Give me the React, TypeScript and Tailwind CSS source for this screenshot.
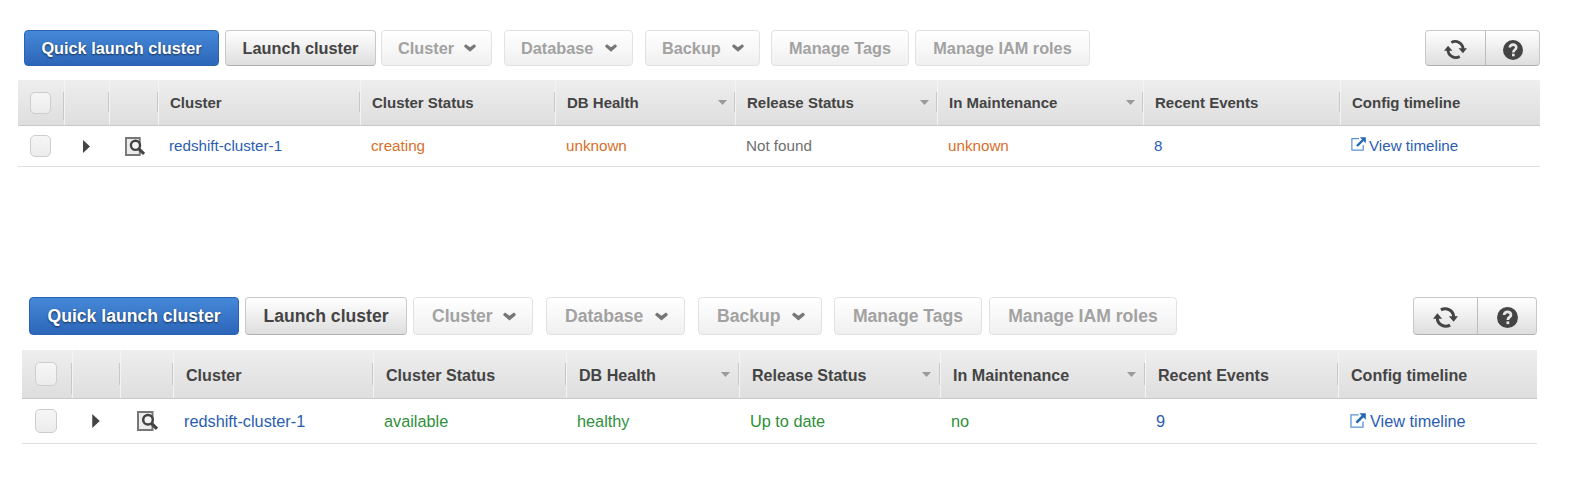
import React from "react";
import clsx from "clsx";

type Size = "md" | "lg";
type Tone = "link" | "warn" | "muted" | "ok";

const tones: Record<Tone, string> = {
  link: "text-[#2a5db0]",
  warn: "text-[#d5712a]",
  muted: "text-[#6f6f6f]",
  ok: "text-[#2f8f3a]",
};

function Chevron({ size }: { size: Size }) {
  return (
    <svg viewBox="0 0 12 8" className={size === "md" ? "h-[8px] w-[12px]" : "h-[9px] w-[13px]"}>
      <path d="M0.3 1.6 L1.9 0.2 L6 3.3 L10.1 0.2 L11.7 1.6 V2.8 L6 7.8 L0.3 2.8 Z" fill="#777" />
    </svg>
  );
}

function RefreshIcon({ className }: { className: string }) {
  return (
    <svg viewBox="0 0 24 22" className={className}>
      <g fill="none" stroke="#444" strokeWidth="2.9">
        <path d="M7.6 3.7 A8.2 8.2 0 0 1 19.9 10.6" />
        <path d="M16.4 18.3 A8.2 8.2 0 0 1 4.1 11.4" />
      </g>
      <path d="M15.2 9.8 H24 L19.8 15 Z" fill="#444" />
      <path d="M0 12.2 H8.8 L4.2 7 Z" fill="#444" />
    </svg>
  );
}

function HelpIcon({ className }: { className: string }) {
  return (
    <svg viewBox="0 0 20 20" className={className}>
      <circle cx="10" cy="10" r="10" fill="#444" />
      <path d="M6.8 7.6 C6.8 3.6 13.4 3.8 13.3 7.5 C13.2 9.8 10.3 9.6 10.3 12.4" fill="none" stroke="#e8e8e8" strokeWidth="2.6" />
      <rect x="9" y="13.7" width="2.7" height="2.6" fill="#e8e8e8" />
    </svg>
  );
}

function InspectIcon({ className }: { className: string }) {
  return (
    <svg viewBox="0 0 21 20" className={className}>
      <path d="M1 1 H15.5 V19 H1 Z" fill="#ececec" stroke="#777" strokeWidth="2" />
      <path d="M14 12 L20 17.8" stroke="#444" strokeWidth="3.2" />
      <circle cx="11" cy="8.8" r="4.8" fill="#f4f4f4" stroke="#444" strokeWidth="2.5" />
    </svg>
  );
}

function ExternalIcon({ className }: { className: string }) {
  return (
    <svg viewBox="0 0 15 14" className={className}>
      <path d="M8 1.7 H0.9 V13.2 H12.2 V8" fill="none" stroke="#5b93cf" strokeWidth="1.2" />
      <path d="M6 9 L12 3" stroke="#2468b3" strokeWidth="2.4" />
      <path d="M8.8 0.2 H14.8 V6.2 Z" fill="#2468b3" />
    </svg>
  );
}

function Button({
  label,
  kind,
  menu,
  size,
  className,
}: {
  label: string;
  kind: "primary" | "normal" | "disabled";
  menu?: boolean;
  size: Size;
  className: string;
}) {
  return (
    <button
      className={clsx(
        "flex shrink-0 items-center rounded-[4px] border font-bold whitespace-nowrap",
        menu ? "justify-between" : "justify-center",
        menu && (size === "md" ? "pr-[15px] pl-[16px]" : "pr-[16px] pl-[18px]"),
        kind === "primary" &&
          "border-[#2a63b4] bg-linear-to-b from-[#4688d8] to-[#2c66b8] text-white [text-shadow:0_1px_2px_#00000099]",
        kind === "normal" &&
          "border-[#c8c8c8] border-b-[#b0b0b0] bg-linear-to-b from-white to-[#dedede] text-[#444]",
        kind === "disabled" && "border-[#e2e2e2] bg-linear-to-b from-white to-[#f0f0f0] text-[#a2a2a2]",
        className,
      )}
    >
      <span>{label}</span>
      {menu && <Chevron size={size} />}
    </button>
  );
}

function Checkbox({ size }: { size: Size }) {
  return (
    <span
      className={clsx(
        "block rounded-[5px] border border-[#cdcdcd] bg-linear-to-b from-[#f6f6f6] to-[#ececec]",
        size === "md" ? "h-[22px] w-[21px]" : "h-[24px] w-[22px]",
      )}
    />
  );
}

function Divider({ size, tall }: { size: Size; tall?: boolean }) {
  return (
    <span className="flex h-full w-[2px] shrink-0">
      <span
        className={clsx(
          "w-px bg-[#c8c8c8]",
          size === "md" ? "mt-[12px]" : "mt-[13px]",
          tall ? (size === "md" ? "h-[28px]" : "h-[31px]") : size === "md" ? "h-[20px]" : "h-[22px]",
        )}
      />
      <span className="h-full w-px bg-[#f4f4f4]" />
    </span>
  );
}

const columns: { title: string; sort?: boolean }[] = [
  { title: "Cluster" },
  { title: "Cluster Status" },
  { title: "DB Health", sort: true },
  { title: "Release Status", sort: true },
  { title: "In Maintenance", sort: true },
  { title: "Recent Events" },
  { title: "Config timeline" },
];

interface PanelProps {
  size: Size;
  className: string;
  toolbar: string;
  buttons: string[];
  tools: string;
  toolWidths: [string, string];
  grid: string;
  values: { text: string; tone: Tone }[];
}

function ClusterPanel({ size, className, toolbar, buttons, tools, toolWidths, grid, values }: PanelProps) {
  const md = size === "md";
  const tool = "flex items-center justify-center pt-[3px]";
  return (
    <section className={className}>
      <div className={clsx("flex", toolbar)}>
        <Button size={size} kind="primary" label="Quick launch cluster" className={buttons[0]} />
        <Button size={size} kind="normal" label="Launch cluster" className={buttons[1]} />
        <Button size={size} kind="disabled" label="Cluster" menu className={buttons[2]} />
        <Button size={size} kind="disabled" label="Database" menu className={buttons[3]} />
        <Button size={size} kind="disabled" label="Backup" menu className={buttons[4]} />
        <Button size={size} kind="disabled" label="Manage Tags" className={buttons[5]} />
        <Button size={size} kind="disabled" label="Manage IAM roles" className={buttons[6]} />
        <div
          className={clsx(
            "ml-auto flex rounded-[4px] border border-[#c8c8c8] border-b-[#b0b0b0] bg-linear-to-b from-white to-[#dedede]",
            tools,
          )}
        >
          <button className={clsx(tool, "border-r border-[#bdbdbd]", toolWidths[0])}>
            <RefreshIcon className={md ? "h-[21px] w-[23px]" : "h-[23px] w-[25px]"} />
          </button>
          <button className={clsx(tool, toolWidths[1])}>
            <HelpIcon className={md ? "size-[20px]" : "size-[21px]"} />
          </button>
        </div>
      </div>

      <div
        className={clsx(
          "grid border-b border-[#c9c9c9] bg-linear-to-b from-[#eeeeee] to-[#dedede] font-bold text-[#444]",
          grid,
          md ? "mt-[14px] h-[46px] text-[15px]" : "mt-[15px] h-[49px] text-[16.1px]",
        )}
      >
        <div className={clsx("flex items-center", md ? "pl-[12px]" : "pl-[13px]")}>
          <Checkbox size={size} />
        </div>
        <Divider size={size} tall />
        <Divider size={size} />
        {columns.map((c) => (
          <div key={c.title} className="flex min-w-0 items-center whitespace-nowrap">
            <Divider size={size} />
            <span className={md ? "pt-px pl-[11px]" : "pt-[2px] pl-[12px]"}>{c.title}</span>
            {c.sort && (
              <svg viewBox="0 0 9 5" className={clsx("ml-auto h-[5px] w-[9px]", md ? "mr-[7px]" : "mr-[8px]")}>
                <path d="M0 0 H9 L4.5 5 Z" fill="#9a9a9a" />
              </svg>
            )}
          </div>
        ))}
      </div>

      <div
        className={clsx(
          "grid items-center border-b border-[#dedede]",
          grid,
          md ? "h-[41px] text-[15.2px]" : "h-[45px] text-[16.3px]",
        )}
      >
        <div className={md ? "pl-[12px]" : "pl-[13px]"}>
          <Checkbox size={size} />
        </div>
        <div className={md ? "pl-[20px]" : "pl-[21px]"}>
          <svg viewBox="0 0 7 13" className={md ? "h-[13px] w-[7px]" : "h-[14px] w-[8px]"}>
            <path d="M0 0 L7 6.5 L0 13 Z" fill="#444" />
          </svg>
        </div>
        <div className={md ? "pl-[17px]" : "pl-[18px]"}>
          <InspectIcon className={md ? "h-[19px] w-[20px]" : "h-[20px] w-[21px]"} />
        </div>
        {values.map((v, i) => (
          <div
            key={i}
            className={clsx("whitespace-nowrap", md ? "pl-[12px]" : "pt-px pl-[12px]", tones[v.tone])}
          >
            {v.text}
          </div>
        ))}
        <div className={clsx("flex items-center whitespace-nowrap", tones.link, md ? "gap-[3px] pl-[12px]" : "gap-[4px] pt-px pl-[13px]")}>
          <ExternalIcon className={md ? "mb-[3px] h-[14px] w-[15px]" : "mb-[3px] h-[15px] w-[16px]"} />
          <span>View timeline</span>
        </div>
      </div>
    </section>
  );
}

export default function App() {
  return (
    <main className="h-[482px] w-[1584px] overflow-hidden bg-white pt-[30px] font-['Liberation_Sans',Arial,sans-serif]">
      <ClusterPanel
        size="md"
        className="ml-[18px] w-[1522px]"
        toolbar="h-[36px] pl-[6px] text-[16.3px]"
        buttons={[
          "w-[195px]",
          "ml-[6px] w-[151px]",
          "ml-[5px] w-[111px]",
          "ml-[12px] w-[129px]",
          "ml-[12px] w-[115px]",
          "ml-[11px] w-[138px]",
          "ml-[6px] w-[175px]",
        ]}
        tools="w-[115px]"
        toolWidths={["w-[60px]", "w-[53px]"]}
        grid="grid-cols-[45px_45px_49px_202px_195px_180px_202px_206px_197px_201px]"
        values={[
          { text: "redshift-cluster-1", tone: "link" },
          { text: "creating", tone: "warn" },
          { text: "unknown", tone: "warn" },
          { text: "Not found", tone: "muted" },
          { text: "unknown", tone: "warn" },
          { text: "8", tone: "link" },
        ]}
      />
      <ClusterPanel
        size="lg"
        className="mt-[130px] ml-[22px] w-[1515px]"
        toolbar="h-[38px] pl-[7px] text-[17.6px]"
        buttons={[
          "w-[210px]",
          "ml-[6px] w-[162px]",
          "ml-[6px] w-[120px]",
          "ml-[13px] w-[139px]",
          "ml-[13px] w-[124px]",
          "ml-[12px] w-[148px]",
          "ml-[7px] w-[188px]",
        ]}
        tools="w-[124px]"
        toolWidths={["w-[64px]", "w-[58px]"]}
        grid="grid-cols-[49px_48px_53px_200px_193px_173px_201px_205px_193px_200px]"
        values={[
          { text: "redshift-cluster-1", tone: "link" },
          { text: "available", tone: "ok" },
          { text: "healthy", tone: "ok" },
          { text: "Up to date", tone: "ok" },
          { text: "no", tone: "ok" },
          { text: "9", tone: "link" },
        ]}
      />
    </main>
  );
}
